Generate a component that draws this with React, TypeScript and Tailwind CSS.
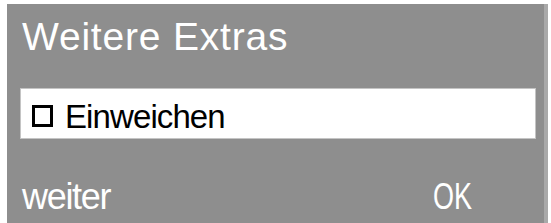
export default function App() {
  return (
    <div className="w-[551px] h-[223px] bg-white flex pl-[7px] pt-[4px] overflow-hidden" style={{ fontFamily: '"Liberation Sans", Arial, sans-serif' }}>
      <div className="w-[537px] h-[219px] bg-[#8e8e8e] flex flex-col">
        <div className="ml-[15px] mt-[13px] text-[39px] leading-none text-white tracking-[0.8px] h-[39px]">Weitere Extras</div>
        <div className="ml-[13px] mr-[8px] mt-[32px] h-[51px] bg-white border border-[#c4c4c4] flex items-center pl-[11px] pt-[5px]">
          <div className="w-[21px] h-[22px] border-[3px] border-black bg-white shrink-0" />
          <div className="ml-[12px] text-[33px] leading-none text-black tracking-[-0.9px]">Einweichen</div>
        </div>
        <div className="mt-[40px] flex items-end justify-between pl-[15px] pr-[72px] text-white text-[36px] leading-none">
          <span className="tracking-[-1.3px]">weiter</span>
          <span className="inline-block scale-x-75 origin-right">OK</span>
        </div>
      </div>
      <div className="w-[4px] h-[219px] bg-[#a9a9a9]" />
    </div>
  );
}
